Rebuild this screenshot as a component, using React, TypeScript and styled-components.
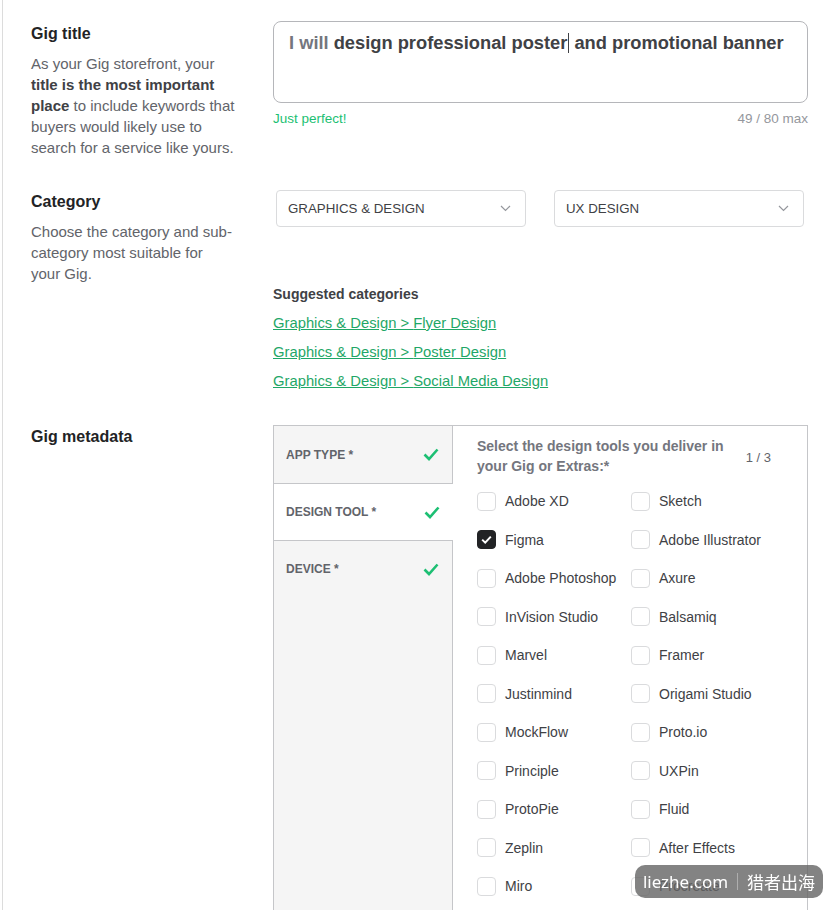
import React from 'react';
import styled, { createGlobalStyle } from 'styled-components';

const GlobalStyle = createGlobalStyle`
  html, body {
    margin: 0;
    background: #fff;
  }
  body {
    font-family: 'Liberation Sans', Arial, sans-serif;
    color: #404145;
  }
`;

const Page = styled.div`
  margin-left: 2px;
  border-left: 1px solid #dcdcdc;
  padding: 21px 26px 40px 28px;
  min-height: 1100px;
`;

const Section = styled.section<{ gap?: number }>`
  display: grid;
  grid-template-columns: 214px 535px;
  column-gap: 28px;
  margin-bottom: ${(p) => p.gap ?? 0}px;
`;

const Aside = styled.div<{ top?: number }>`
  padding-top: ${(p) => p.top ?? 0}px;
`;

const Heading = styled.h3`
  margin: 0 0 8px;
  font-size: 16px;
  line-height: 22px;
  font-weight: 700;
  color: #222325;
`;

const Hint = styled.p`
  margin: 0;
  width: 204px;
  font-size: 15px;
  line-height: 21px;
  color: #62646a;

  b {
    color: #404145;
  }
`;

const TitleBox = styled.div`
  box-sizing: border-box;
  height: 82px;
  border: 1px solid #b5b6ba;
  border-radius: 8px;
  padding: 9px 6px 9px 15px;
  font-size: 18.3px;
  line-height: 24px;
  font-weight: 700;
  color: #404145;
  white-space: nowrap;
  overflow: hidden;
`;

const Prefix = styled.span`
  color: #74767e;
`;

const Caret = styled.span`
  display: inline-block;
  width: 1px;
  height: 20px;
  margin: 0 0 -4px 1px;
  background: #404145;
`;

const Meta = styled.div`
  display: flex;
  justify-content: space-between;
  margin-top: 8px;
  font-size: 13.5px;
  color: #95979d;
`;

const Ok = styled.span`
  color: #1dbf73;
`;

const SelectRow = styled.div`
  display: flex;
  gap: 28px;
  padding: 3px 4px 0 3px;
`;

const Select = styled.div`
  flex: 1;
  box-sizing: border-box;
  height: 37px;
  display: flex;
  align-items: center;
  justify-content: space-between;
  padding: 0 14px 0 11px;
  border: 1px solid #dadbdd;
  border-radius: 4px;
  font-size: 13.3px;
  text-transform: uppercase;
  color: #404145;
`;

const Suggested = styled.div`
  margin-top: 57px;
`;

const SubHeading = styled.div`
  font-size: 14px;
  font-weight: 700;
  line-height: 20px;
  color: #404145;
`;

const LinkItem = styled.a`
  display: block;
  margin-top: 9px;
  font-size: 14.8px;
  line-height: 20px;
  color: #1fa767;
  text-decoration: underline;
`;

const MetaBox = styled.div`
  display: grid;
  grid-template-columns: 179px minmax(0, 1fr);
  border: 1px solid #c5c6c9;
  border-bottom: none;
  min-height: 600px;
`;

const TabList = styled.div`
  background: #f5f5f5;
  border-right: 1px solid #c5c6c9;
`;

const Tab = styled.div<{ active?: boolean }>`
  box-sizing: border-box;
  height: 57px;
  display: flex;
  align-items: center;
  justify-content: space-between;
  padding: 0 13px 0 12px;
  font-size: 12px;
  font-weight: 700;
  text-transform: uppercase;
  color: #62646a;
  background: ${(p) => (p.active ? '#fff' : 'transparent')};
  margin-right: ${(p) => (p.active ? '-1px' : '0')};
  & + & {
    border-top: 1px solid #c5c6c9;
  }
`;

const Pane = styled.div`
  padding: 10px 36px 0 24px;
`;

const PaneHead = styled.div`
  display: flex;
  align-items: center;
  justify-content: space-between;
`;

const Question = styled.div`
  width: 262px;
  font-size: 14px;
  line-height: 20px;
  font-weight: 700;
  color: #74767e;
`;

const Counter = styled.span`
  font-size: 13px;
  color: #62646a;
  margin-top: 2px;
`;

const Options = styled.div`
  display: grid;
  grid-template-columns: 154px 1fr;
  grid-auto-rows: 38.5px;
  align-items: center;
  margin-top: 6px;
`;

const Option = styled.label`
  display: flex;
  align-items: center;
  gap: 9px;
  font-size: 14px;
  color: #404145;
  white-space: nowrap;
`;

const Box = styled.span<{ checked?: boolean }>`
  box-sizing: border-box;
  width: 19px;
  height: 19px;
  flex: none;
  display: flex;
  align-items: center;
  justify-content: center;
  border-radius: 4px;
  border: 1px solid ${(p) => (p.checked ? '#222325' : '#dadbdd')};
  background: ${(p) => (p.checked ? '#222325' : '#fff')};
`;

const Badge = styled.div`
  position: fixed;
  right: 11px;
  bottom: 12px;
  width: 188px;
  height: 33px;
  box-sizing: border-box;
  display: flex;
  align-items: center;
  justify-content: center;
  gap: 9px;
  border-radius: 10px;
  background: rgba(100, 100, 100, 0.8);
  color: #fff;
  font-family: 'Noto Sans', 'Noto Sans CJK SC', sans-serif;
  font-size: 17px;
`;

const BadgeRule = styled.span`
  width: 1px;
  height: 17px;
  background: rgba(255, 255, 255, 0.35);
`;

const Chevron = () => (
  <svg width="11" height="7" viewBox="0 0 11 7" fill="none">
    <path d="M1 1l4.5 4.5L10 1" stroke="#95979d" strokeWidth="1.2" />
  </svg>
);

const GreenCheck = () => (
  <svg width="16" height="13" viewBox="0 0 16 13" fill="none">
    <path d="M1.5 6.5l4.5 4.5L14.5 1.5" stroke="#1dbf73" strokeWidth="2.6" />
  </svg>
);

const TickMark = () => (
  <svg width="11" height="9" viewBox="0 0 11 9" fill="none">
    <path d="M1.2 4.6l3 3L9.8 1.6" stroke="#fff" strokeWidth="2" />
  </svg>
);

const tabs = ['App type *', 'Design tool *', 'Device *'];

const tools: [string, boolean][] = [
  ['Adobe XD', false],
  ['Sketch', false],
  ['Figma', true],
  ['Adobe Illustrator', false],
  ['Adobe Photoshop', false],
  ['Axure', false],
  ['InVision Studio', false],
  ['Balsamiq', false],
  ['Marvel', false],
  ['Framer', false],
  ['Justinmind', false],
  ['Origami Studio', false],
  ['MockFlow', false],
  ['Proto.io', false],
  ['Principle', false],
  ['UXPin', false],
  ['ProtoPie', false],
  ['Fluid', false],
  ['Zeplin', false],
  ['After Effects', false],
  ['Miro', false],
  ['Procreate', false],
  ['Webflow', false],
  ['Other', false],
];

const suggestions = ['Flyer Design', 'Poster Design', 'Social Media Design'];

export default function App() {
  return (
    <>
      <GlobalStyle />
      <Page>
        <Section gap={29}>
          <Aside top={2}>
            <Heading>Gig title</Heading>
            <Hint>
              As your Gig storefront, your <b>title is the most important place</b> to include
              keywords that buyers would likely use to search for a service like yours.
            </Hint>
          </Aside>
          <div>
            <TitleBox>
              <Prefix>I will </Prefix>design professional poster
              <Caret /> and promotional banner
            </TitleBox>
            <Meta>
              <Ok>Just perfect!</Ok>
              <span>49 / 80 max</span>
            </Meta>
          </div>
        </Section>

        <Section gap={34}>
          <Aside top={4}>
            <Heading>Category</Heading>
            <Hint>Choose the category and sub-category most suitable for your Gig.</Hint>
          </Aside>
          <div>
            <SelectRow>
              <Select>
                Graphics &amp; Design
                <Chevron />
              </Select>
              <Select>
                UX Design
                <Chevron />
              </Select>
            </SelectRow>
            <Suggested>
              <SubHeading>Suggested categories</SubHeading>
              {suggestions.map((s) => (
                <LinkItem key={s}>Graphics &amp; Design &gt; {s}</LinkItem>
              ))}
            </Suggested>
          </div>
        </Section>

        <Section>
          <Aside top={1}>
            <Heading>Gig metadata</Heading>
          </Aside>
          <MetaBox>
            <TabList>
              {tabs.map((t, i) => (
                <Tab key={t} active={i === 1}>
                  {t}
                  <GreenCheck />
                </Tab>
              ))}
            </TabList>
            <Pane>
              <PaneHead>
                <Question>Select the design tools you deliver in your Gig or Extras:*</Question>
                <Counter>1 / 3</Counter>
              </PaneHead>
              <Options>
                {tools.map(([name, checked]) => (
                  <Option key={name}>
                    <Box checked={checked}>{checked && <TickMark />}</Box>
                    {name}
                  </Option>
                ))}
              </Options>
            </Pane>
          </MetaBox>
        </Section>
      </Page>
      <Badge>
        <span>liezhe.com</span>
        <BadgeRule />
        <span>猎者出海</span>
      </Badge>
    </>
  );
}
